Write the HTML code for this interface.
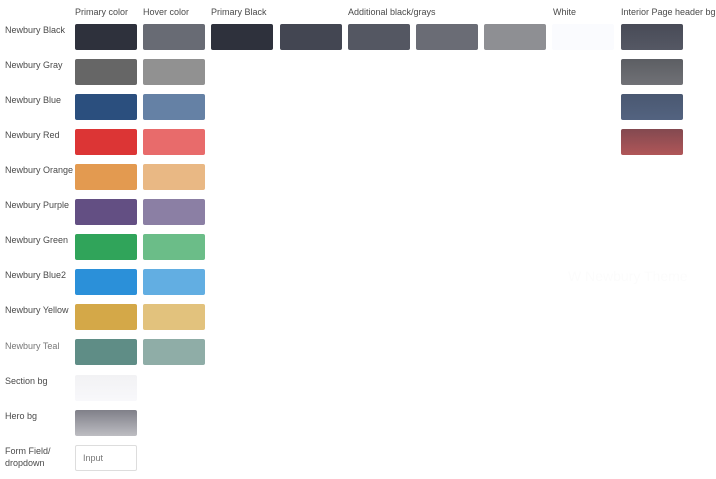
<!DOCTYPE html><html><head><style>
body{margin:0;width:716px;height:479px;background:#fff;font-family:"Liberation Sans",sans-serif;font-size:9px;color:#4a4a4a;position:relative;overflow:hidden}
.t{position:absolute;top:7px;white-space:nowrap}
.l{position:absolute;left:5px;white-space:nowrap;line-height:12px}
.s{position:absolute;width:62px;height:26px;border-radius:2px}
</style></head><body>
<div class="t" style="left:75px">Primary color</div>
<div class="t" style="left:143px">Hover color</div>
<div class="t" style="left:211px">Primary Black</div>
<div class="t" style="left:348px">Additional black/grays</div>
<div class="t" style="left:553px">White</div>
<div class="t" style="left:621px">Interior Page header bg</div>

<div class="l" style="top:24px">Newbury Black</div>
<div class="l" style="top:59px">Newbury Gray</div>
<div class="l" style="top:94px">Newbury Blue</div>
<div class="l" style="top:129px">Newbury Red</div>
<div class="l" style="top:164px">Newbury Orange</div>
<div class="l" style="top:199px">Newbury Purple</div>
<div class="l" style="top:234px">Newbury Green</div>
<div class="l" style="top:269px">Newbury Blue2</div>
<div class="l" style="top:304px">Newbury Yellow</div>
<div class="l" style="top:340px;color:#777">Newbury Teal</div>
<div class="l" style="top:375px">Section bg</div>
<div class="l" style="top:410px">Hero bg</div>
<div class="l" style="top:445px">Form Field/<br>dropdown</div>

<div class="s" style="left:75px;top:24px;background:#2e313c"></div>
<div class="s" style="left:143px;top:24px;background:#686b74"></div>
<div class="s" style="left:211px;top:24px;background:#2e313c"></div>
<div class="s" style="left:280px;top:24px;background:#434652"></div>
<div class="s" style="left:348px;top:24px;background:#545762"></div>
<div class="s" style="left:416px;top:24px;background:#6a6c75"></div>
<div class="s" style="left:484px;top:24px;background:#8e8f93"></div>
<div class="s" style="left:552px;top:24px;background:#fafbfe"></div>
<div class="s" style="left:621px;top:24px;background:linear-gradient(#484b57,#555864)"></div>
<div class="s" style="left:621px;top:59px;background:linear-gradient(#5c5e63,#707176)"></div>
<div class="s" style="left:621px;top:94px;background:linear-gradient(#4a5871,#536380)"></div>
<div class="s" style="left:621px;top:129px;background:linear-gradient(#834950,#b05658)"></div>

<div class="s" style="left:75px;top:59px;background:#666"></div>
<div class="s" style="left:143px;top:59px;background:#919191"></div>
<div class="s" style="left:75px;top:94px;background:#2b4f7e"></div>
<div class="s" style="left:143px;top:94px;background:#6581a5"></div>
<div class="s" style="left:75px;top:129px;background:#dc3535"></div>
<div class="s" style="left:143px;top:129px;background:#e86b6b"></div>
<div class="s" style="left:75px;top:164px;background:#e39a50"></div>
<div class="s" style="left:143px;top:164px;background:#e9b884"></div>
<div class="s" style="left:75px;top:199px;background:#634f83"></div>
<div class="s" style="left:143px;top:199px;background:#8b7fa4"></div>
<div class="s" style="left:75px;top:234px;background:#30a45a"></div>
<div class="s" style="left:143px;top:234px;background:#6bbd88"></div>
<div class="s" style="left:75px;top:269px;background:#2b90d9"></div>
<div class="s" style="left:143px;top:269px;background:#62aee2"></div>
<div class="s" style="left:75px;top:304px;background:#d4a848"></div>
<div class="s" style="left:143px;top:304px;background:#e2c27d"></div>
<div class="s" style="left:75px;top:339px;background:#5f8d86"></div>
<div class="s" style="left:143px;top:339px;background:#8fada7"></div>
<div class="s" style="left:75px;top:375px;background:linear-gradient(#f2f2f4,#f8f8fb)"></div>
<div class="s" style="left:75px;top:410px;background:linear-gradient(#808089,#bdbdc2)"></div>
<div class="s" style="left:75px;top:445px;width:60px;height:24px;border:1px solid #ddd;background:#fff;font-size:9px;color:#777;line-height:24px;box-sizing:content-box"><span style="padding-left:7px">Input</span></div>
<div style="position:absolute;left:568px;top:268px;font-size:14px;color:#fcfcfc">W Newbury Theme</div>
</body></html>
